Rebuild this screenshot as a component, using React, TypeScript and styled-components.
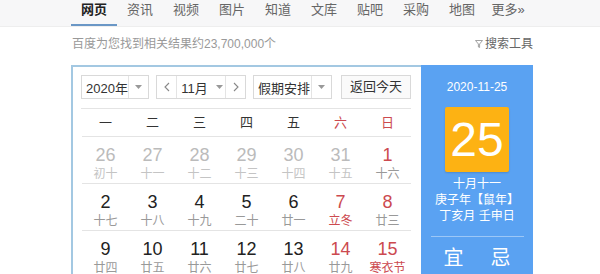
import styled, { createGlobalStyle } from 'styled-components';

const GlobalStyle = createGlobalStyle`
  html, body {
    margin: 0;
    padding: 0;
    background: #fff;
    overflow: hidden;
  }
  body {
    font-family: 'Liberation Sans', 'Noto Sans CJK SC', sans-serif;
    color: #333;
  }
`;

type Day = {
  num: number;
  lunar: string;
  other?: boolean;
  weekend?: boolean;
  festival?: boolean;
};

const tabs = ['网页', '资讯', '视频', '图片', '知道', '文库', '贴吧', '采购', '地图', '更多»'];
const weekdays = ['一', '二', '三', '四', '五', '六', '日'];

const weeks: Day[][] = [
  [
    { num: 26, lunar: '初十', other: true },
    { num: 27, lunar: '十一', other: true },
    { num: 28, lunar: '十二', other: true },
    { num: 29, lunar: '十三', other: true },
    { num: 30, lunar: '十四', other: true },
    { num: 31, lunar: '十五', other: true },
    { num: 1, lunar: '十六', weekend: true },
  ],
  [
    { num: 2, lunar: '十七' },
    { num: 3, lunar: '十八' },
    { num: 4, lunar: '十九' },
    { num: 5, lunar: '二十' },
    { num: 6, lunar: '廿一' },
    { num: 7, lunar: '立冬', weekend: true, festival: true },
    { num: 8, lunar: '廿三', weekend: true },
  ],
  [
    { num: 9, lunar: '廿四' },
    { num: 10, lunar: '廿五' },
    { num: 11, lunar: '廿六' },
    { num: 12, lunar: '廿七' },
    { num: 13, lunar: '廿八' },
    { num: 14, lunar: '廿九', weekend: true },
    { num: 15, lunar: '寒衣节', weekend: true, festival: true },
  ],
];

const Arrow = () => (
  <svg width='7' height='4' viewBox='0 0 7 4'>
    <path d='M0 0 L7 0 L3.5 4 Z' fill='#999' />
  </svg>
);

const Chevron = ({ dir }: { dir: 'left' | 'right' }) => (
  <svg width='6' height='10' viewBox='0 0 6 10'>
    <path
      d={dir === 'left' ? 'M5 1 L1 5 L5 9' : 'M1 1 L5 5 L1 9'}
      fill='none'
      stroke='#888'
      strokeWidth='1.1'
    />
  </svg>
);

const App = () => {
  return (
    <>
      <GlobalStyle />
      <Nav>
        {tabs.map((t, i) => (
          <Tab key={t} active={i === 0}>
            {t}
          </Tab>
        ))}
      </Nav>

      <ResultBar>
        <span>百度为您找到相关结果约23,700,000个</span>
        <Tools>
          <svg width='8' height='8' viewBox='0 0 8 8'>
            <path d='M0.5 0.5 L7.5 0.5 L4.6 4 L4.6 7.5 L3.4 7 L3.4 4 Z' fill='none' stroke='#999' strokeWidth='0.9' />
          </svg>
          搜索工具
        </Tools>
      </ResultBar>

      <Calendar>
        <MainPane>
          <Toolbar>
            <Select width={68}>
              <SelectText>2020年</SelectText>
              <SelectArrow>
                <Arrow />
              </SelectArrow>
            </Select>
            <Select width={90}>
              <NavBtn>
                <Chevron dir='left' />
              </NavBtn>
              <MonthText>
                11月
                <Arrow />
              </MonthText>
              <NavBtn right>
                <Chevron dir='right' />
              </NavBtn>
            </Select>
            <Select width={79}>
              <SelectText>假期安排</SelectText>
              <SelectArrow>
                <Arrow />
              </SelectArrow>
            </Select>
            <TodayBtn>返回今天</TodayBtn>
          </Toolbar>

          <WeekHeader>
            {weekdays.map((w, i) => (
              <WeekCell key={w} weekend={i >= 5}>
                {w}
              </WeekCell>
            ))}
          </WeekHeader>

          {weeks.map((week, wi) => (
            <WeekRow key={wi}>
              {week.map(d => (
                <DayCell key={d.num}>
                  <DayNum other={!!d.other} weekend={!!d.weekend}>
                    {d.num}
                  </DayNum>
                  <Lunar other={!!d.other} festival={!!d.festival}>
                    {d.lunar}
                  </Lunar>
                </DayCell>
              ))}
            </WeekRow>
          ))}
        </MainPane>

        <SidePane>
          <SideDate>2020-11-25</SideDate>
          <BigDay>25</BigDay>
          <LunarInfo>
            <div>十月十一</div>
            <div>庚子年【鼠年】</div>
            <div>丁亥月 壬申日</div>
          </LunarInfo>
          <Divider />
          <YiJi>
            <span>宜</span>
            <span>忌</span>
          </YiJi>
        </SidePane>
      </Calendar>
    </>
  );
};

const Nav = styled.div`
  display: flex;
  height: 27px;
  padding-left: 71px;
  background: #f7f7f8;
  border-bottom: 1px solid #eeeeee;
  box-sizing: border-box;
`;

const Tab = styled.div<{ active: boolean }>`
  width: 46px;
  height: 100%;
  box-sizing: border-box;
  text-align: center;
  font-size: 13px;
  line-height: 20px;
  color: ${({ active }) => (active ? '#222' : '#666')};
  font-weight: ${({ active }) => (active ? 700 : 400)};
  border-bottom: 2px solid ${({ active }) => (active ? '#6a97c6' : 'transparent')};
`;

const ResultBar = styled.div`
  display: flex;
  align-items: flex-start;
  justify-content: space-between;
  width: 462px;
  height: 38px;
  margin-left: 72px;
  padding-top: 10px;
  box-sizing: border-box;
  font-size: 12px;
  line-height: 14px;
  color: #999;
`;

const Tools = styled.span`
  display: flex;
  align-items: center;
  gap: 2px;
  color: #666;
  margin-right: 1px;
`;

const Calendar = styled.div`
  display: flex;
  width: 462px;
  margin-left: 71px;
`;

const MainPane = styled.div`
  width: 350px;
  box-sizing: border-box;
  border: 2px solid #a3c8e2;
  border-right: none;
  padding: 8px 10px 0 9px;
`;

const Toolbar = styled.div`
  display: flex;
  gap: 7px;
  height: 24px;
  margin-left: -1px;
  padding-bottom: 9px;
  border-bottom: 1px solid #e4e4e4;
`;

const Select = styled.div<{ width: number }>`
  display: flex;
  width: ${({ width }) => width}px;
  height: 24px;
  box-sizing: border-box;
  border: 1px solid #d9d9d9;
  font-size: 13px;
  color: #333;
`;

const SelectText = styled.div`
  flex: 1;
  display: flex;
  align-items: center;
  padding-left: 4px;
`;

const SelectArrow = styled.div`
  width: 19px;
  display: flex;
  align-items: center;
  justify-content: center;
  border-left: 1px solid #e4e4e4;
`;

const NavBtn = styled.div<{ right?: boolean }>`
  width: 19px;
  display: flex;
  align-items: center;
  justify-content: center;
  border-${({ right }) => (right ? 'left' : 'right')}: 1px solid #e4e4e4;
`;

const MonthText = styled.div`
  flex: 1;
  display: flex;
  align-items: center;
  justify-content: center;
  gap: 8px;
  padding-left: 2px;
`;

const TodayBtn = styled.div`
  margin-left: auto;
  width: 70px;
  height: 24px;
  box-sizing: border-box;
  border: 1px solid #d9d9d9;
  background: #fafafa;
  font-size: 13px;
  line-height: 22px;
  text-align: center;
  color: #333;
`;

const WeekHeader = styled.div`
  display: grid;
  grid-template-columns: repeat(7, 47px);
  height: 27px;
  border-bottom: 1px solid #e4e4e4;
`;

const WeekCell = styled.div<{ weekend: boolean }>`
  text-align: center;
  font-size: 13px;
  line-height: 27px;
  color: ${({ weekend }) => (weekend ? '#cc4a4f' : '#333')};
`;

const WeekRow = styled.div`
  display: grid;
  grid-template-columns: repeat(7, 47px);
  height: 46px;
  border-bottom: 1px solid #e4e4e4;
`;

const DayCell = styled.div`
  display: flex;
  flex-direction: column;
  align-items: center;
  padding-top: 8px;
`;

const DayNum = styled.div<{ other: boolean; weekend: boolean }>`
  font-size: 18px;
  line-height: 20px;
  color: ${({ other, weekend }) => (other ? '#bbb' : weekend ? '#cc4a4f' : '#222')};
`;

const Lunar = styled.div<{ other: boolean; festival: boolean }>`
  font-size: 12px;
  line-height: 14px;
  margin-top: 2px;
  color: ${({ other, festival }) => (festival ? '#cc4a4f' : other ? '#c4c4c4' : '#999')};
`;

const SidePane = styled.div`
  width: 112px;
  height: 220px;
  background: #5aa2f2;
  display: flex;
  flex-direction: column;
  align-items: center;
  color: #fff;
`;

const SideDate = styled.div`
  margin-top: 15px;
  font-size: 12px;
  line-height: 14px;
`;

const BigDay = styled.div`
  margin-top: 13px;
  width: 64px;
  height: 65px;
  border-radius: 2px;
  background: #fdb213;
  box-shadow: 0 1px 2px rgba(0, 0, 0, 0.15);
  font-size: 48px;
  line-height: 65px;
  text-align: center;
`;

const LunarInfo = styled.div`
  margin-top: 4px;
  font-size: 12px;
  line-height: 16px;
  text-align: center;
`;

const Divider = styled.div`
  width: 93px;
  height: 1px;
  margin-top: 12px;
  background: rgba(255, 255, 255, 0.4);
`;

const YiJi = styled.div`
  display: flex;
  justify-content: space-between;
  width: 67px;
  margin-top: 9px;
  font-size: 20px;
  line-height: 24px;
`;

export default App;
